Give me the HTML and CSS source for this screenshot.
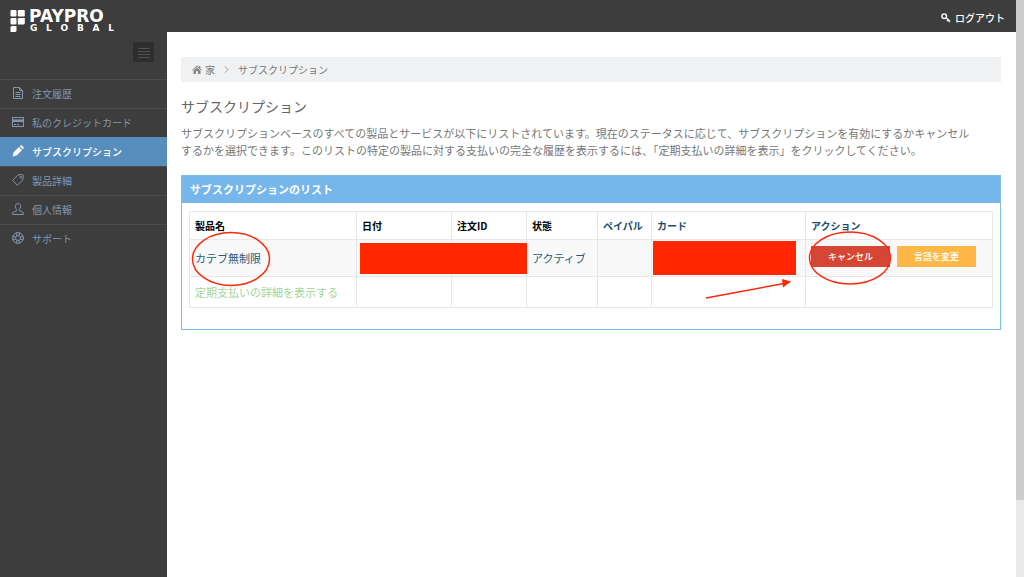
FILE: index.html
```html
<!DOCTYPE html>
<html lang="ja">
<head>
<meta charset="utf-8">
<title>サブスクリプション</title>
<link rel="stylesheet" href="styles.css">
</head>
<body>
<div class="app">
  <header class="topbar">
    <a class="brand" href="#" aria-label="PayPro Global">
      <svg class="brand-mark" width="15" height="23" viewBox="0 0 15 23" fill="#fff"><rect x="0.500" y="0" width="6" height="6.500" rx="1"/><rect x="7.800" y="0" width="7" height="6.500" rx="1"/><rect x="0.500" y="8" width="6" height="6.500" rx="1"/><path d="M8.800 8h6v5.500l-1 1H7.800V9z"/><path d="M1.500 16h5v5l-1 1h-5v-5z"/></svg>
      <span class="brand-text"><span class="brand-top">PAYPRO</span><span class="brand-sub"><span>G</span><span>L</span><span>O</span><span>B</span><span>A</span><span>L</span></span></span>
    </a>
    <a class="logout" href="#"><svg width="10" height="10" viewBox="0 0 10 10" fill="none" stroke="#fff" stroke-width="1.4"><circle cx="3.2" cy="3.2" r="2.3"/><path d="M5 4.8l4 3.5M7.2 6.6L6 8.2M8.8 7.7L7.8 9.2"/></svg>ログアウト</a>
  </header>
  <div class="body">
    <aside class="sidebar">
      <div class="toggle-row"><button class="toggle" type="button" aria-label="メニュー"><svg width="12" height="11" viewBox="0 0 12 11" stroke="#505050"><path d="M0 1.5h12M0 4.5h12M0 7.5h12M0 10.5h12"/></svg></button></div>
      <nav class="menu">
        <a class="item" href="#"><svg class="icon" viewBox="0 0 12 12"><path d="M1.5.5h6l3 3v8h-9zM7.500.5v3h3M3.500 5.500h5M3.500 7.500h5M3.500 9.500h5"/></svg>注文履歴</a>
        <a class="item" href="#"><svg class="icon" viewBox="0 0 12 12"><rect x=".5" y="1.500" width="11" height="9"/><path d="M.5 4.700h11" stroke-width="2.600"/><path d="M2 8.500h2M5 8.500h2"/></svg>私のクレジットカード</a>
        <a class="item active" href="#"><svg class="icon solid" viewBox="0 0 12 12"><path d="M.6 11.400l.9-4L6.900 2l3.100 3.100-5.400 5.400zM7.700 1.200l.8-.7q.8-.6 1.500.1l1.400 1.400q.7.700.1 1.500l-.7.800z"/></svg>サブスクリプション</a>
        <a class="item" href="#"><svg class="icon" viewBox="0 0 12 12"><path d="M.6 6.200L6.200.8l4.600-.2.600.8-.5 4.400-5.600 5.500z"/><circle cx="8.800" cy="3.200" r=".9"/></svg>製品詳細</a>
        <a class="item" href="#"><svg class="icon" viewBox="0 0 12 12"><path d="M6 .6C4.200.6 3.400 1.700 3.400 3.300c0 1.500.4 2.400 1.200 3.200v1.300L1.600 8.900Q.6 9.400.6 11.400h10.800q0-2-1-2.500l-3-1.100V6.500c.8-.8 1.200-1.700 1.200-3.200C8.600 1.700 7.800.6 6 .6z"/></svg>個人情報</a>
        <a class="item" href="#"><svg class="icon" viewBox="0 0 12 12"><circle cx="6" cy="6" r="5.400"/><circle cx="6" cy="6" r="2.500"/><path d="M4.700.9v2.700M7.300.9v2.700M4.700 8.400v2.700M7.300 8.400v2.700M.9 4.700h2.700M.9 7.300h2.700M8.400 4.700h2.700M8.400 7.300h2.700"/></svg>サポート</a>
      </nav>
    </aside>
    <main class="content">
      <nav class="crumbs" aria-label="パンくず">
        <a href="#"><svg width="10" height="9" viewBox="0 0 10 9" fill="#888"><path d="M5 .6L0 4.900l.6.600L5 1.800l4.400 3.700.6-.600-1.700-1.500V1H7v1.300z"/><path d="M1.500 5.500L5 2.600l3.500 2.900V9H6V6.300H4V9H1.500z"/></svg>家</a>
        <svg width="5" height="7" viewBox="0 0 5 7" fill="none" stroke="#999"><path d="M1 .5l3 3-3 3"/></svg>
        <span>サブスクリプション</span>
      </nav>
      <h1 class="title">サブスクリプション</h1>
      <p class="lead">サブスクリプションベースのすべての製品とサービスが以下にリストされています。現在のステータスに応じて、サブスクリプションを有効にするかキャンセル<br>するかを選択できます。このリストの特定の製品に対する支払いの完全な履歴を表示するには、「定期支払いの詳細を表示」をクリックしてください。</p>
      <section class="panel">
        <h2 class="panel-head">サブスクリプションのリスト</h2>
        <div class="panel-body">
          <table class="grid">
            <colgroup><col class="c-name"><col class="c-date"><col class="c-order"><col class="c-state"><col class="c-paypal"><col class="c-card"><col></colgroup>
            <thead><tr><th>製品名</th><th>日付</th><th>注文ID</th><th>状態</th><th class="navy">ペイパル</th><th class="navy">カード</th><th class="navy">アクション</th></tr></thead>
            <tbody>
              <tr class="main-row"><td>カテブ無制限</td><td></td><td></td><td>アクティブ</td><td></td><td></td><td><div class="actions"><button class="btn cancel" type="button">キャンセル</button><button class="btn change" type="button">言語を変更</button></div></td></tr>
              <tr class="detail-row"><td><a href="#">定期支払いの詳細を表示する</a></td><td></td><td></td><td></td><td></td><td></td><td></td></tr>
            </tbody>
          </table>
        </div>
        <svg class="marks" width="820" height="156" viewBox="0 0 820 156" fill="none" stroke="#fa2a0c" stroke-width="1.500">
          <g fill="#ff2600" stroke="none"><rect x="179" y="68" width="167" height="31"/><rect x="472" y="66" width="143" height="34"/><path d="M601 104l9 2.500-8 6z"/></g>
          <ellipse cx="50" cy="84" rx="38.500" ry="26.500"/><ellipse cx="669" cy="83" rx="40.500" ry="26"/><path d="M525 123l78-14.500"/>
        </svg>
      </section>
    </main>
  </div>
</div>
<div class="scroll"><div class="thumb"></div></div>
</body>
</html>
```
FILE: styles.css
```css
* { box-sizing: border-box; }
body {
  margin: 0;
  min-height: 100vh;
  display: flex;
  background: #fff;
  color: #777;
  font-family: "Noto Sans CJK JP", sans-serif;
  font-size: 11px;
}
a { color: inherit; text-decoration: none; }
button { font-family: inherit; border: 0; padding: 0; }
svg { flex: none; }
.app { flex: 1; min-width: 0; display: flex; flex-direction: column; }
.scroll { width: 8px; background: #e9e9e9; }
.thumb { height: 500px; background: #cdcdcd; }

.topbar {
  height: 32px;
  padding: 0 11px 0 10px;
  display: flex;
  justify-content: space-between;
  background: #3d3d3d;
  color: #fff;
}
.brand { display: flex; gap: 4px; padding-top: 10px; }
.brand-text { width: 85px; font-family: "DejaVu Sans", sans-serif; }
.brand-top { display: block; font-size: 17px; line-height: 12px; font-weight: 700; }
.brand-sub { display: flex; justify-content: space-between; padding-left: 1px; font-size: 9px; line-height: 12px; font-weight: 700; }
.logout { display: flex; align-items: center; gap: 4px; padding-top: 3px; font-size: 10px; font-weight: 500; }

.body { flex: 1; display: flex; }
.sidebar { width: 167px; flex: none; background: #3d3d3d; }
.toggle-row { height: 47px; padding: 10px 13px; display: flex; justify-content: flex-end; }
.toggle { width: 21px; height: 20px; display: grid; place-items: center; background: #2e2e2e; }
.item {
  height: 29px;
  padding: 0 0 2px 12px;
  display: flex;
  align-items: center;
  gap: 8px;
  border-top: 1px solid #4b4b4b;
  color: #8496ad;
  font-size: 10px;
}
.icon { width: 12px; height: 12px; fill: none; stroke: currentColor; }
.icon.solid { fill: currentColor; stroke: none; }
.item.active { background: #578ebe; border-color: #578ebe; color: #fff; font-weight: 500; }

.content { flex: 1; min-width: 0; padding: 25px 15px 24px 14px; }
.crumbs {
  height: 25px;
  padding: 0 11px;
  display: flex;
  align-items: center;
  gap: 9px;
  background: #f0f1f3;
  font-size: 10px;
}
.crumbs a { display: flex; align-items: center; gap: 3px; }
.title { margin: 15px 0 10px; font-size: 14px; line-height: 18px; font-weight: 400; color: #666; }
.lead { margin: 0 0 16px; line-height: 17px; }
.panel { position: relative; border: 1px solid #7cbdec; }
.panel-head {
  margin: 0;
  padding: 0 8px;
  background: #76b6ea;
  color: #fff;
  font-size: 11px;
  line-height: 27px;
}
.panel-body { padding: 8px 7px 21px; }
.grid { width: 100%; table-layout: fixed; border-collapse: collapse; color: #275a7c; }
.grid th, .grid td { border: 1px solid #e7e7e7; padding: 0 5px; text-align: left; white-space: nowrap; }
.grid th { height: 28px; padding-bottom: 1px; font-size: 10px; color: #000; }
.grid th.navy { color: #1c4c6e; }
.main-row td { height: 37px; background: #f9f9f9; }
.detail-row td { height: 31px; padding-bottom: 1px; color: #a5d59b; }
.c-name { width: 167px; }
.c-date { width: 95px; }
.c-order { width: 75px; }
.c-state { width: 71px; }
.c-paypal { width: 54px; }
.c-card { width: 154px; }
.actions { display: flex; gap: 7px; padding-bottom: 4px; }
.btn { width: 79px; height: 21px; font-size: 9px; font-weight: 500; color: #fff; }
.cancel { background: #d64635; }
.change { background: #ffb848; }
.marks { position: absolute; top: -1px; left: -1px; pointer-events: none; }
```
